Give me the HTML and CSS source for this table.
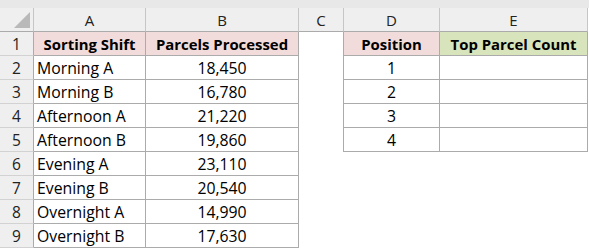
FILE: index.html
```html
<!DOCTYPE html>
<html>
<head>
<meta charset="utf-8">
<link rel="stylesheet" href="styles.css">
</head>
<body>
<div class="topband"></div>
<div class="sheet">
  <div class="corner"><span class="tri"></span></div>
  <div class="colh">A</div>
  <div class="colh">B</div>
  <div class="colh">C</div>
  <div class="colh">D</div>
  <div class="colh">E</div>

  <div class="rowh">1</div>
  <div class="cell hd pink">Sorting Shift</div>
  <div class="cell hd pink">Parcels Processed</div>
  <div class="cell blank edge"></div>
  <div class="cell hd pink">Position</div>
  <div class="cell hd green">Top Parcel Count</div>

  <div class="rowh">2</div>
  <div class="cell">Morning A</div>
  <div class="cell num">18,450</div>
  <div class="cell blank edge"></div>
  <div class="cell num">1</div>
  <div class="cell"></div>

  <div class="rowh">3</div>
  <div class="cell">Morning B</div>
  <div class="cell num">16,780</div>
  <div class="cell blank edge"></div>
  <div class="cell num">2</div>
  <div class="cell"></div>

  <div class="rowh">4</div>
  <div class="cell">Afternoon A</div>
  <div class="cell num">21,220</div>
  <div class="cell blank edge"></div>
  <div class="cell num">3</div>
  <div class="cell"></div>

  <div class="rowh">5</div>
  <div class="cell">Afternoon B</div>
  <div class="cell num">19,860</div>
  <div class="cell blank edge"></div>
  <div class="cell num">4</div>
  <div class="cell"></div>

  <div class="rowh">6</div>
  <div class="cell">Evening A</div>
  <div class="cell num">23,110</div>
  <div class="cell blank"></div>
  <div class="cell blank"></div>
  <div class="cell blank"></div>

  <div class="rowh">7</div>
  <div class="cell">Evening B</div>
  <div class="cell num">20,540</div>
  <div class="cell blank"></div>
  <div class="cell blank"></div>
  <div class="cell blank"></div>

  <div class="rowh">8</div>
  <div class="cell">Overnight A</div>
  <div class="cell num">14,990</div>
  <div class="cell blank"></div>
  <div class="cell blank"></div>
  <div class="cell blank"></div>

  <div class="rowh">9</div>
  <div class="cell">Overnight B</div>
  <div class="cell num">17,630</div>
  <div class="cell blank"></div>
  <div class="cell blank"></div>
  <div class="cell blank"></div>
</div>
</body>
</html>
```

FILE: styles.css
```css
html, body {
  margin: 0;
  padding: 0;
  background: #ffffff;
  width: 589px;
  height: 249px;
  overflow: hidden;
}

body {
  font-family: "Open Sans", "Liberation Sans", sans-serif;
  font-size: 15px;
  color: #000000;
}

.topband {
  height: 8px;
  background: #e8e8e8;
}

.sheet {
  display: grid;
  grid-template-columns: 34px 112px 153px 45px 96px 148px;
  grid-template-rows: 24px repeat(9, 24px);
}

.corner {
  background: #efefef;
  border-right: 1px solid #c6c6c6;
  border-bottom: 1px solid #ababab;
  box-sizing: border-box;
  position: relative;
}

.tri {
  position: absolute;
  right: 3px;
  bottom: 3px;
  width: 0;
  height: 0;
  border-left: 16px solid transparent;
  border-bottom: 16px solid #b9b9b9;
}

.colh {
  background: #efefef;
  border-right: 1px solid #c6c6c6;
  border-bottom: 1px solid #ababab;
  box-sizing: border-box;
  display: flex;
  align-items: center;
  justify-content: center;
  font-size: 15px;
  color: #222;
  padding-top: 1px;
}

.rowh {
  background: #efefef;
  border-right: 1px solid #ababab;
  border-bottom: 1px solid #d2d2d2;
  box-sizing: border-box;
  display: flex;
  align-items: center;
  justify-content: center;
  font-size: 15.5px;
  color: #222;
  padding-top: 1px;
}

.cell {
  border-right: 1px solid #ababab;
  border-bottom: 1px solid #ababab;
  box-sizing: border-box;
  display: flex;
  align-items: center;
  padding: 1px 3px 0 3px;
  white-space: nowrap;
  overflow: hidden;
  font-size: 15.8px;
}

.num {
  justify-content: center;
}

.hd {
  justify-content: center;
  font-weight: bold;
  font-size: 14.9px;
}

.pink {
  background: #f2dcdb;
}

.green {
  background: #d8e4bc;
}

.blank {
  border-right: none;
  border-bottom: none;
}

.blank.edge {
  border-right: 1px solid #ababab;
}
```
